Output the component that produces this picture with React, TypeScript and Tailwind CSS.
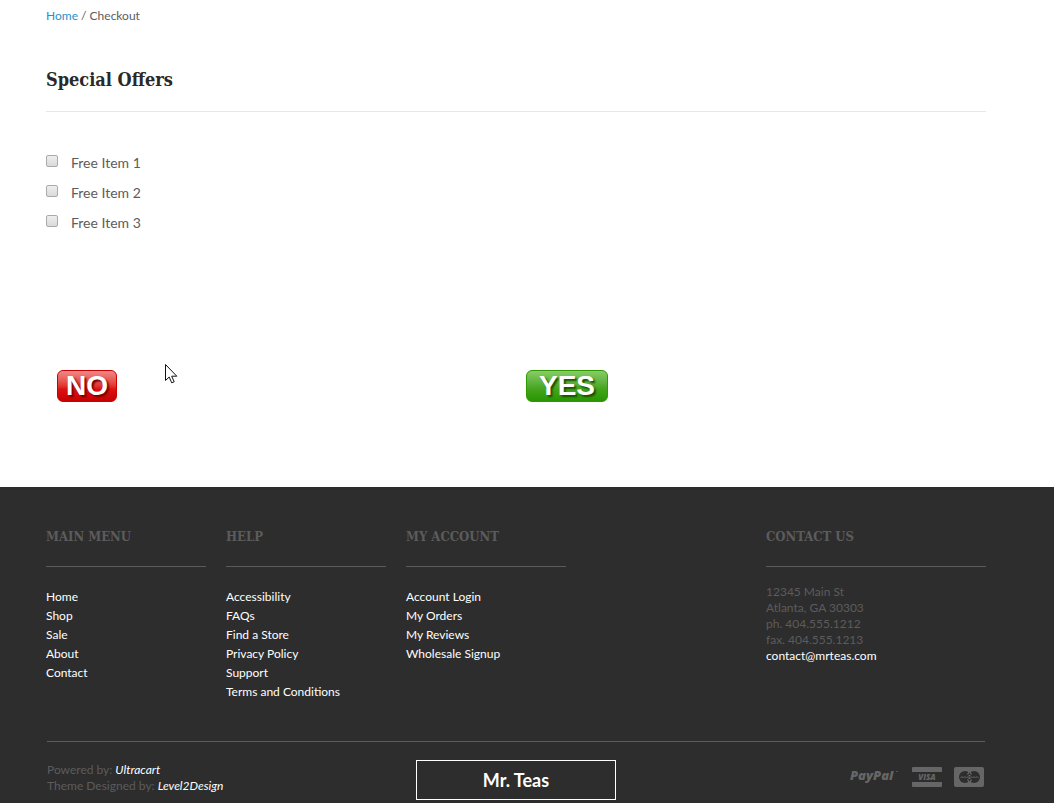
import type { ReactNode } from "react";

const offers = ["Free Item 1", "Free Item 2", "Free Item 3"];

const menus = [
    { title: "Main Menu", links: ["Home", "Shop", "Sale", "About", "Contact"] },
    {
        title: "Help",
        links: [
            "Accessibility",
            "FAQs",
            "Find a Store",
            "Privacy Policy",
            "Support",
            "Terms and Conditions",
        ],
    },
    {
        title: "My Account",
        links: ["Account Login", "My Orders", "My Reviews", "Wholesale Signup"],
    },
];

function FooterHeading({ children }: { children: ReactNode }) {
    return (
        <h2 className="h-10 border-b border-[#5c5c5c] font-['DejaVu_Serif_Condensed','DejaVu_Serif',serif] text-[13px] leading-5 font-bold text-[#5c5c5c] uppercase">
            {children}
        </h2>
    );
}

function PaymentIcons() {
    return (
        <div className="flex items-center">
            {/* PayPal */}
            <svg className="overflow-visible" width="54" height="20" viewBox="0 0 54 20" role="img" aria-label="PayPal">
                <text
                    x="2"
                    y="13"
                    fill="#666"
                    fontFamily="Open Sans, sans-serif"
                    fontSize="13"
                    fontWeight="800"
                    fontStyle="italic"
                >
                    PayPal
                </text>
                <path d="M48 4.500h2" stroke="#555" />
            </svg>
            {/* Visa */}
            <svg className="ml-2.5" width="30" height="20" viewBox="0 0 30 20" role="img" aria-label="Visa">
                <path d="M1 0h28a1 1 0 0 1 1 1v4H0V1a1 1 0 0 1 1-1ZM0 15h30v4a1 1 0 0 1-1 1H1a1 1 0 0 1-1-1Z" fill="#666" />
                <text
                    x="15"
                    y="13"
                    textAnchor="middle"
                    fill="#666"
                    fontFamily="Open Sans, sans-serif"
                    fontSize="8"
                    fontWeight="800"
                    fontStyle="italic"
                >
                    VISA
                </text>
            </svg>
            {/* MasterCard */}
            <svg className="ml-3" width="30" height="20" viewBox="0 0 30 20" aria-hidden="true">
                <rect width="30" height="20" rx="2" fill="#666" />
                <circle cx="11" cy="10" r="6" fill="#2d2d2d" />
                <circle cx="20" cy="10" r="6" fill="#2d2d2d" />
                <path d="m15.500 3.500 2.500 3.500-2.500 2.500L13 7ZM15.500 16.500 18 13l-2.500-2.500L13 13Z" fill="#666" />
                <path d="m15.500 5.500 1.500 2.500h-3ZM15.500 14.500 17 12h-3Z" fill="#2d2d2d" />
                <path d="M6.500 11 8 9.500 9.500 11 11 9.500l1.500 1.500L14 9.500l1.500 1.500L17 9.500l1.500 1.500L20 9.500l1.500 1.500L23 9.500l1.500 1.500" fill="none" stroke="#666" strokeWidth="1" />
            </svg>
        </div>
    );
}

export default function App() {
    return (
        <div className="flex min-h-screen flex-col bg-white font-['Lato',sans-serif] text-[#5c5c5c]">
            <main className="relative h-[487px] pr-[68px] pl-[46px]">
                <nav className="pt-2 text-[12px] leading-4" aria-label="Breadcrumb">
                    <a href="#" className="text-[#2c8fc7]">Home</a> / <span>Checkout</span>
                </nav>

                <h1 className="mt-[42px] h-[46px] border-b border-[#e8e8e8] font-['DejaVu_Serif_Condensed','DejaVu_Serif',serif] text-[18px] leading-7 font-bold text-[#292929]">
                    Special Offers
                </h1>

                <ul className="mt-9">
                    {offers.map((offer) => (
                        <li key={offer}>
                            <label className="flex h-[30px] gap-[13px] text-[14px] leading-[30px]">
                                <input
                                    type="checkbox"
                                    className="mt-[7px] h-3 w-3 appearance-none rounded-[2px] border border-[#aaa] bg-linear-to-b from-[#eee] to-[#dadada] checked:bg-[#2c8fc7]"
                                />
                                {offer}
                            </label>
                        </li>
                    ))}
                </ul>

                <div className="mt-[132px] grid grid-cols-2 font-['Liberation_Sans',sans-serif] text-[28px] leading-7 font-bold text-white">
                    <div className="pl-[11px]">
                        <button
                            type="button"
                            className="h-8 w-[60px] rounded-[6px] border border-[#c00] bg-linear-to-b from-[#e88] via-[#d11] via-60% to-[#c80000] text-shadow-[2px_2px_2px_#700]"
                        >
                            NO
                        </button>
                    </div>
                    <div className="pl-2.5">
                        <button
                            type="button"
                            className="h-8 w-[82px] rounded-[6px] border border-[#2e9900] bg-linear-to-b from-[#8c6] via-[#43a51b] via-60% to-[#289600] text-shadow-[2px_2px_2px_#164f00]"
                        >
                            YES
                        </button>
                    </div>
                </div>

                {/* Pointer */}
                <svg className="absolute top-[364px] left-[165px]" width="13" height="20" viewBox="0 0 13 20" aria-hidden="true">
                    <path d="M.5.500v16l3.700-3.500 2.500 5.800 2.500-1-2.500-5.600h5.100Z" fill="#fff" stroke="#111" />
                </svg>
            </main>

            <footer className="flex-1 bg-[#2d2d2d] pt-10 pr-[68px] pl-[46px]">
                <div className="flex h-[214px] gap-5">
                    {menus.map((menu) => (
                        <nav key={menu.title} className="w-40" aria-label={menu.title}>
                            <FooterHeading>{menu.title}</FooterHeading>
                            <ul className="mt-5 text-[12px] leading-[19px] text-white">
                                {menu.links.map((link) => (
                                    <li key={link}>
                                        <a href="#">{link}</a>
                                    </li>
                                ))}
                            </ul>
                        </nav>
                    ))}
                    <section className="ml-auto w-[220px]">
                        <FooterHeading>Contact Us</FooterHeading>
                        <address className="mt-[17px] text-[12px] leading-4 text-[#5c5c5c] not-italic">
                            <p>12345 Main St</p>
                            <p>Atlanta, GA 30303</p>
                            <p>ph. 404.555.1212</p>
                            <p>fax. 404.555.1213</p>
                            <a href="#" className="text-white">contact@mrteas.com</a>
                        </address>
                    </section>
                </div>

                <div className="mx-px grid grid-cols-[1fr_200px_1fr] border-t border-[#5c5c5c] pt-[18px]">
                    <div className="pt-0.5 text-[12px] leading-4 text-[#5c5c5c]">
                        <p>
                            Powered by: <a href="#" className="text-white italic">Ultracart</a>
                        </p>
                        <p>
                            Theme Designed by: <a href="#" className="text-white italic">Level2Design</a>
                        </p>
                    </div>
                    <a href="#" className="h-10 border border-white text-center text-[18px] leading-[38px] font-bold text-white">
                        Mr. Teas
                    </a>
                    <div className="flex justify-end pt-[7px] pr-px">
                        <div><PaymentIcons /></div>
                    </div>
                </div>
            </footer>
        </div>
    );
}
